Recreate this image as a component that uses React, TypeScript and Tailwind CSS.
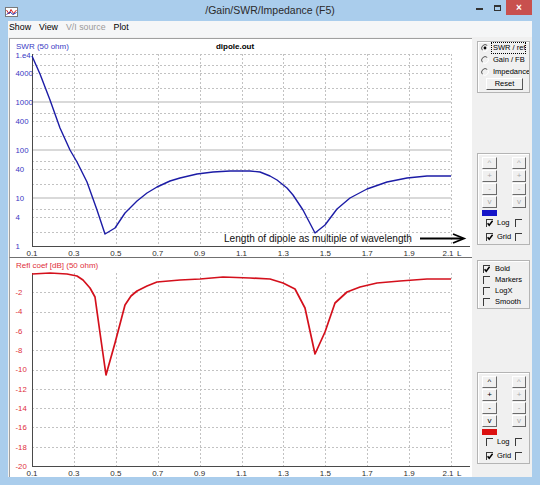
const SVG_FONT = "Liberation Sans, Arial, sans-serif";

const xL = (l: number) => 32 + (l - 0.1) * 209.5;
const ySwr = (v: number) => 246 - Math.log10(v) * 48;
const yDb = (d: number) => 273 - d * 9.65;
const px = (n: number) => Math.round(n) + 0.5;

const TICKS = ["0.1", "0.3", "0.5", "0.7", "0.9", "1.1", "1.3", "1.5", "1.7", "1.9", "2.1"];

const SWR_PTS = [
  [32, 56], [40, 74], [50, 100], [60, 128], [70, 150], [77, 162], [87, 182], [97, 210], [105, 234],
  [115, 228], [125, 213], [137, 201], [147, 193], [157, 187], [170, 181], [180, 178], [197, 174],
  [213, 172], [230, 171], [250, 171], [260, 172], [270, 176], [277, 180], [287, 188], [293, 195],
  [303, 210], [315, 233], [325, 225], [337, 209], [350, 198], [367, 189], [387, 182], [407, 178],
  [427, 176], [451, 176],
];

const REFL_PTS = [
  [32, 274], [50, 273], [67, 274], [77, 276], [83, 280], [90, 288], [95, 297], [100, 333], [106, 375],
  [115, 343], [125, 305], [131, 296], [137, 291], [147, 286], [157, 282], [180, 280], [200, 279],
  [223, 277], [250, 278], [270, 279], [283, 283], [295, 289], [305, 308], [315, 354], [325, 332],
  [335, 303], [347, 292], [360, 287], [377, 283], [400, 281], [427, 279], [451, 279],
];

const pts = (a: number[][]) => a.map(([x, y]) => `${x},${y}`).join(" ");

function VGrid({ y1, y2 }: { y1: number; y2: number }) {
  return (
    <>
      {TICKS.slice(1).map((t) => (
        <line key={t} x1={px(xL(parseFloat(t)))} x2={px(xL(parseFloat(t)))} y1={y1} y2={y2} stroke="#c2c2c2" strokeDasharray="2 2" />
      ))}
    </>
  );
}

function XLabels({ y }: { y: number }) {
  return (
    <g fontFamily={SVG_FONT} fontSize="8" fill="#303030">
      {TICKS.map((t) => (
        <text key={t} x={xL(parseFloat(t)) - (t === "2.1" ? 3 : 0)} y={y} textAnchor="middle">
          {t}
        </text>
      ))}
      <text x="457" y={y}>L</text>
    </g>
  );
}

function TopPlot() {
  const minor: number[] = [];
  for (let d = 0; d < 4; d++) for (const m of [2, 4, 6]) minor.push(m * 10 ** d);
  const yLabels: [string, number][] = [
    ["1.e4", 1e4], ["4000", 4000], ["1000", 1000], ["400", 400], ["100", 100],
    ["40", 40], ["10", 10], ["4", 4], ["1", 1],
  ];
  return (
    <svg width="462" height="218" className="block">
      <g transform="translate(-10,-39)">
        <VGrid y1={54} y2={246} />
        {minor.concat([1e4]).map((v) => (
          <line key={v} x1={32} x2={451} y1={px(ySwr(v))} y2={px(ySwr(v))} stroke="#c2c2c2" strokeDasharray="2 2" />
        ))}
        {[10, 100, 1000].map((v) => (
          <line key={v} x1={32} x2={451} y1={ySwr(v)} y2={ySwr(v)} stroke="#cdcdcd" strokeWidth="1.6" />
        ))}
        <line x1="32.5" x2="32.5" y1="54" y2="247" stroke="#4a4a4a" />
        <line x1="32" x2="470" y1="246.5" y2="246.5" stroke="#4a4a4a" />
        <polyline points={pts(SWR_PTS)} fill="none" stroke="#1c1ca6" strokeWidth="1.4" strokeLinejoin="round" />
        <g fontFamily={SVG_FONT} fontSize="7.8" fill="#3a3ac4">
          {yLabels.map(([t, v]) => (
            <text key={t} x="15.5" y={ySwr(v) + (v === 1e4 ? 3.5 : 2.8)}>
              {t}
            </text>
          ))}
          <text x="16" y="48.5" fontSize="8">SWR (50 ohm)</text>
        </g>
        <text x="235" y="49" textAnchor="middle" fontFamily={SVG_FONT} fontSize="8" fontWeight="bold" fill="#000">
          dipole.out
        </text>
        <XLabels y={256.3} />
        <text x="224" y="241.8" fontFamily={SVG_FONT} fontSize="10.1" fill="#111">
          Length of dipole as multiple of wavelength
        </text>
        <line x1="420" x2="463" y1="238.5" y2="238.5" stroke="#000" strokeWidth="1.8" />
        <polyline points="453,234 464,238.5 453,243" fill="none" stroke="#000" strokeWidth="1.8" />
      </g>
    </svg>
  );
}

function BottomPlot() {
  const levels = [-2, -4, -6, -8, -10, -12, -14, -16, -18];
  return (
    <svg width="462" height="219" className="block">
      <g transform="translate(-10,-258)">
        <VGrid y1={273} y2={466} />
        {levels.map((v) => (
          <line key={v} x1={32} x2={451} y1={px(yDb(v))} y2={px(yDb(v))} stroke="#c2c2c2" strokeDasharray="2 2" />
        ))}
        <line x1="32.5" x2="32.5" y1="273" y2="466.5" stroke="#4a4a4a" />
        <line x1="32" x2="470" y1="466.5" y2="466.5" stroke="#4a4a4a" />
        <polyline points={pts(REFL_PTS)} fill="none" stroke="#d4101c" strokeWidth="1.7" strokeLinejoin="round" />
        <g fontFamily={SVG_FONT} fontSize="7.8" fill="#e0303a">
          {levels.concat([-20]).map((v) => (
            <text key={v} x="15.5" y={yDb(v) + 2.8}>
              {v}
            </text>
          ))}
          <text x="16" y="268" fontSize="8">Refl coef [dB] (50 ohm)</text>
        </g>
        <XLabels y={476} />
      </g>
    </svg>
  );
}

function Radio({ on }: { on?: boolean }) {
  return (
    <svg width="8" height="8" viewBox="0 0 8 8" className="shrink-0">
      <path d="M6.47 1.53 A3.5 3.5 0 0 0 1.53 6.47" fill="none" stroke="#555" />
      <path d="M1.53 6.47 A3.5 3.5 0 0 0 6.47 1.53" fill="none" stroke="#fff" />
      {on && <circle cx="4" cy="4" r="1.4" fill="#000" />}
    </svg>
  );
}

function Check({ on }: { on?: boolean }) {
  return (
    <span className="block w-[7px] h-[8px] shrink-0 border-t border-l border-[#3a3a3a]">
      {on && (
        <svg width="6" height="7" viewBox="0 0 6 7" className="block">
          <path d="M0.6 3.2 L2.2 5.2 L5.6 0.8" fill="none" stroke="#000" strokeWidth="1.5" />
        </svg>
      )}
    </span>
  );
}

function Btn({ label, dim, wide }: { label: string; dim?: boolean; wide?: boolean }) {
  return (
    <div
      className={`h-[12px] ${wide ? "w-[15px]" : "w-[14px]"} flex items-center justify-center bg-[#f0f0f0] border border-t-white border-l-white border-r-[#6a6a6a] border-b-[#6a6a6a] text-[8px] leading-none ${
        dim ? "text-[#a9a9a9]" : "text-black"
      }`}
    >
      {label}
    </div>
  );
}

function Group({ className, children }: { className: string; children: React.ReactNode }) {
  return (
    <div className={`ml-[5px] w-[53px] border border-[#b4b4b4] shadow-[inset_1px_1px_0_#ffffff] flex flex-col ${className}`}>
      {children}
    </div>
  );
}

function RadioRow({ label, on, focus }: { label: string; on?: boolean; focus?: boolean }) {
  return (
    <div className="h-[12px] flex items-center pl-[3px] gap-[2px] text-[7.5px] text-black">
      <Radio on={on} />
      <span
        className={`whitespace-nowrap overflow-hidden leading-[10px] ${
          focus ? "border border-dotted border-black w-[35px] pl-[1px]" : "pl-[2px]"
        }`}
      >
        {label}
      </span>
    </div>
  );
}

function ScaleGroup({ mt, swatch, log, leftDim }: { mt: string; swatch: string; log?: boolean; leftDim?: boolean }) {
  return (
    <Group className={`${mt} h-[92px] pt-[3px]`}>
      <div className="flex flex-col gap-[1px]">
        {["^", "+", "-", "v"].map((l) => (
          <div key={l} className="flex pl-[4px] gap-[15px]">
            <Btn label={l} dim={leftDim} wide />
            <Btn label={l} dim />
          </div>
        ))}
      </div>
      <div className={`ml-[4px] mt-[2px] w-[15px] h-[6px] ${swatch}`} />
      <div className="mt-[1px] h-[12px] flex items-center pl-[8px] text-[7.5px]">
        <Check on={log} />
        <span className="w-[22px] pl-[4px]">Log</span>
        <Check />
      </div>
      <div className="mt-[2px] h-[12px] flex items-center pl-[8px] text-[7.5px]">
        <Check on />
        <span className="w-[22px] pl-[4px]">Grid</span>
        <Check />
      </div>
    </Group>
  );
}

function CheckRow({ label, on }: { label: string; on?: boolean }) {
  return (
    <div className="h-[11px] flex items-center pl-[5px] gap-[5px] text-[7.5px]">
      <Check on={on} />
      <span>{label}</span>
    </div>
  );
}

function AppIcon() {
  return (
    <svg width="13" height="10" viewBox="0 0 13 10">
      <rect x="0.5" y="0.5" width="12" height="9" fill="#fff" stroke="#7a7a7a" />
      <polyline points="1.5,3 4,7 6,2.5 8.5,6.5 11.5,3" fill="none" stroke="#d42020" strokeWidth="1" />
      <polyline points="1.5,7.5 5,5 8,7.5 11.5,5.5" fill="none" stroke="#2030b0" strokeWidth="1" />
    </svg>
  );
}

export default function App() {
  return (
    <div className="w-[540px] h-[485px] bg-[#aacdec] flex flex-col overflow-hidden font-['Liberation_Sans',Arial,sans-serif] select-none">
      <div className="h-[21px] shrink-0 grid grid-cols-[1fr_auto_1fr] items-center">
        <div className="pl-[5px] pt-[2px] flex">
          <AppIcon />
        </div>
        <div className="text-[10.5px] text-[#2a2a2a] whitespace-nowrap">/Gain/SWR/Impedance (F5)</div>
        <div className="flex justify-end self-start h-full">
          <div className="w-[17px] h-[15px] flex items-center justify-center">
            <div className="w-[7px] h-[2px] bg-[#333] mt-[3px]" />
          </div>
          <div className="w-[18px] h-[15px] flex items-center justify-center">
            <div className="w-[7px] h-[6px] border border-[#333] border-t-2" />
          </div>
          <div className="w-[26px] h-[15px] bg-[#c8504e] flex items-center justify-center text-white text-[10px] font-bold leading-none">
            ×
          </div>
          <div className="w-[8px]" />
        </div>
      </div>

      <div className="flex-1 mx-[8px] mb-[8px] flex flex-col bg-[#f0f0f0]">
        <div className="h-[16px] shrink-0 bg-[#f5f6f7] flex items-center gap-[8px] pl-[1px] pb-[2px] text-[8.8px] text-black">
          <span>Show</span>
          <span>View</span>
          <span className="text-[#9a9a9a]">V/I source</span>
          <span>Plot</span>
        </div>

        <div className="flex-1 flex">
          <div className="w-[464px] pl-[1px] pt-[1px] flex flex-col">
            <div className="h-[220px] bg-white border-t border-l border-b border-t-[#a0a0a0] border-l-[#a0a0a0] border-b-[#707070]">
              <TopPlot />
            </div>
            <div className="h-[219px] bg-white border-l border-[#a0a0a0]">
              <BottomPlot />
            </div>
          </div>

          <div className="w-[60px] flex flex-col">
            <Group className="mt-[4px] h-[52px]">
              <RadioRow label="SWR / ref" on focus />
              <RadioRow label="Gain / FB" />
              <RadioRow label="Impedance" />
              <div className="ml-[8px] w-[37px] h-[12px] flex items-center justify-center bg-[#f0f0f0] border border-t-white border-l-white border-r-[#555] border-b-[#555] text-[7.5px] leading-none">
                Reset
              </div>
            </Group>

            <ScaleGroup mt="mt-[60px]" swatch="bg-[#1414c8]" log leftDim />

            <Group className="mt-[15px] h-[49px] pt-[2px]">
              <CheckRow label="Bold" on />
              <CheckRow label="Markers" />
              <CheckRow label="LogX" />
              <CheckRow label="Smooth" />
            </Group>

            <ScaleGroup mt="mt-[63px]" swatch="bg-[#dc1010]" />
          </div>
        </div>
      </div>
    </div>
  );
}
